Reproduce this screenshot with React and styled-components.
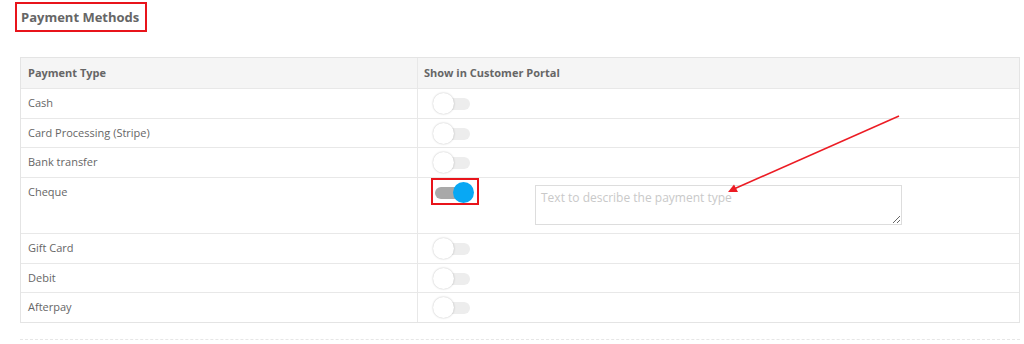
import React from "react";
import styled, { createGlobalStyle } from "styled-components";

const GlobalStyle = createGlobalStyle`
  html, body {
    margin: 0;
    padding: 0;
    background: #ffffff;
  }
  body {
    font-family: "Open Sans", "Liberation Sans", sans-serif;
    color: #666666;
  }
`

const Page = styled.div`
  position: relative;
  width: 1024px;
  height: 344px;
  padding-top: 2px;
  box-sizing: border-box;
  overflow: hidden;
`

const TitleWrap = styled.div`
  padding-left: 15px;
`

const Title = styled.h3`
  display: inline-block;
  margin: 0;
  padding: 0 6px 0 4px;
  height: 26px;
  line-height: 26px;
  border: 2px solid #e8141b;
  font-size: 13px;
  font-weight: 700;
  color: #666666;
`

const Table = styled.div`
  width: 1000px;
  margin: 25px 0 0 20px;
  border: 1px solid #e4e4e4;
  box-sizing: border-box;
`

const Row = styled.div`
  display: grid;
  grid-template-columns: 397px 1fr;
  height: ${(p) => p.head ? "31px" : p.tall ? "56px" : "29.7px"};
  box-sizing: border-box;
  border-bottom: 1px solid #e8e8e8;
  background: ${(p) => p.head ? "#f5f5f5" : "#ffffff"};
  &:last-child {
    border-bottom: none;
    height: 29px;
  }
`

const TypeCell = styled.div`
  border-right: 1px solid #e8e8e8;
  padding: ${(p) => p.head ? "0 7px" : "6px 7px 0"};
  line-height: ${(p) => p.head ? "30px" : "16px"};
  font-size: 11px;
  font-weight: ${(p) => p.head ? 700 : 400};
  color: #666666;
`

const PortalCell = styled.div`
  display: flex;
  align-items: flex-start;
  font-size: 11px;
  font-weight: 700;
  line-height: 30px;
  color: #666666;
  padding-left: ${(p) => p.head ? "6px" : "13px"};
`

const SwitchFrame = styled.div`
  flex: none;
  padding: 2px 4px 0 0;
  border: 2px solid ${(p) => p.highlight ? "#e8141b" : "transparent"};
`

const SwitchBody = styled.div`
  position: relative;
  width: 40px;
  height: 21px;
  cursor: pointer;
`

const Track = styled.div`
  position: absolute;
  left: 2px;
  top: 5px;
  width: 35px;
  height: 12px;
  border-radius: 6px;
  background: ${(p) => p.on ? "#a9a9a9" : "#ededed"};
`

const Knob = styled.div`
  position: absolute;
  top: 0;
  left: ${(p) => p.on ? "20px" : "0"};
  width: 21px;
  height: 21px;
  border-radius: 50%;
  box-sizing: border-box;
  background: ${(p) => p.on ? "#08a8f4" : "#ffffff"};
  box-shadow: ${(p) => p.on ? "none" : "0 0 2px rgba(0, 0, 0, 0.28)"};
`

const Describe = styled.textarea`
  margin: 7px 0 0 56px;
  width: 367px;
  height: 40px;
  box-sizing: border-box;
  padding: 3px 5px;
  border: 1px solid #dddddd;
  border-radius: 0;
  font-family: "Open Sans", "Liberation Sans", sans-serif;
  font-size: 12px;
  line-height: 18px;
  color: #555555;
  outline: none;
  &::placeholder {
    color: #c9c9c9;
  }
`

const Divider = styled.div`
  width: 1000px;
  margin: 16px 0 0 20px;
  border-top: 1px dashed #e6e6e6;
`

const Annotation = styled.svg`
  position: absolute;
  left: 0;
  top: 0;
  pointer-events: none;
`

function Switch({ on, highlight }) {
  return (
    <SwitchFrame highlight={highlight}>
      <SwitchBody>
        <Track on={on} />
        <Knob on={on} />
      </SwitchBody>
    </SwitchFrame>
  )
}

function App() {

  const methods = [
    { id: 1, name: "Cash", on: false },
    { id: 2, name: "Card Processing (Stripe)", on: false },
    { id: 3, name: "Bank transfer", on: false },
    { id: 4, name: "Cheque", on: true, describe: true },
    { id: 5, name: "Gift Card", on: false },
    { id: 6, name: "Debit", on: false },
    { id: 7, name: "Afterpay", on: false },
  ]

  return (
    <>
      <GlobalStyle />
      <Page>
        <TitleWrap>
          <Title>Payment Methods</Title>
        </TitleWrap>
        <Table>
          <Row head>
            <TypeCell head>Payment Type</TypeCell>
            <PortalCell head>Show in Customer Portal</PortalCell>
          </Row>
          {methods.map((m) => (
            <Row key={m.id} tall={m.describe}>
              <TypeCell>{m.name}</TypeCell>
              <PortalCell>
                <Switch on={m.on} highlight={m.describe} />
                {m.describe && (
                  <Describe placeholder="Text to describe the payment type" />
                )}
              </PortalCell>
            </Row>
          ))}
        </Table>
        <Divider />
        <Annotation width="1024" height="344" viewBox="0 0 1024 344">
          <line x1="899" y1="116" x2="735" y2="188.5" stroke="#ec1c24" strokeWidth="1.5" />
          <polygon points="728,192 734,184.5 738,192" fill="#ec1c24" />
        </Annotation>
      </Page>
    </>
  )
}

export default App;
